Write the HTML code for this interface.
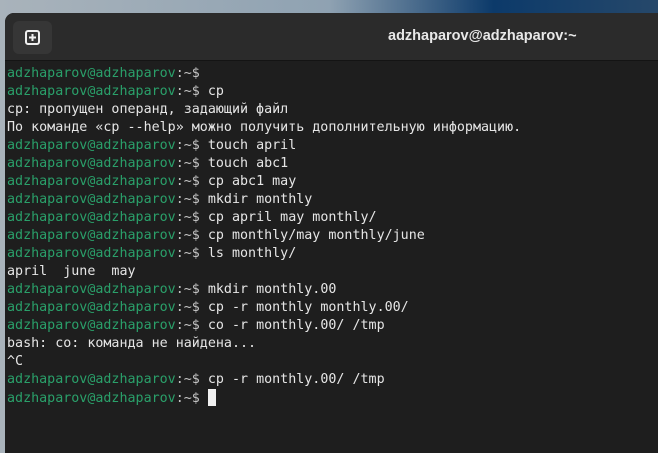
<!DOCTYPE html>
<html><head><meta charset="utf-8"><style>
html,body{margin:0;padding:0;width:658px;height:440px;overflow:hidden;background:linear-gradient(90deg,#a9b3bb 0%,#8fa2b2 50%,#0c3a6a 75%,#26486a 100%);}
.win{position:absolute;left:5px;top:13px;width:660px;height:440px;background:#1e1e1e;border-radius:9px 0 0 0;overflow:hidden;}
.hdr{height:47px;background:#2b2b2b;border-bottom:1px solid #141414;position:relative;}
.btn{position:absolute;left:8px;top:8px;width:39px;height:33px;background:#363636;border-radius:6px;}
.btn svg{position:absolute;left:12px;top:9px;}
.title{position:absolute;left:383px;top:15px;font:bold 14.5px "Liberation Sans",sans-serif;color:#e8e8e8;}
pre{margin:0;position:absolute;left:2px;top:52px;font:13.35px/18px "DejaVu Sans Mono","Liberation Mono",monospace;color:#e6e6e6;}
.g{color:#2aa06a}.s{color:#c4c4c4}
.cur{display:inline-block;width:8px;height:17px;background:#f0f0f0;vertical-align:-4px;}
</style></head><body>
<div class="win">
<div class="hdr"><div class="btn"><svg width="15" height="15" viewBox="0 0 15 15"><rect x="1" y="1" width="13" height="13" rx="2" fill="none" stroke="#f0f0f0" stroke-width="2"/><path d="M7.5 4v7M4 7.5h7" stroke="#f0f0f0" stroke-width="2"/></svg></div>
<div class="title">adzhaparov@adzhaparov:~</div></div>
<pre><span class="g">adzhaparov@adzhaparov</span><span class="s">:~$</span>
<span class="g">adzhaparov@adzhaparov</span><span class="s">:~$</span> cp
cp: пропущен операнд, задающий файл
По команде «cp --help» можно получить дополнительную информацию.
<span class="g">adzhaparov@adzhaparov</span><span class="s">:~$</span> touch april
<span class="g">adzhaparov@adzhaparov</span><span class="s">:~$</span> touch abc1
<span class="g">adzhaparov@adzhaparov</span><span class="s">:~$</span> cp abc1 may
<span class="g">adzhaparov@adzhaparov</span><span class="s">:~$</span> mkdir monthly
<span class="g">adzhaparov@adzhaparov</span><span class="s">:~$</span> cp april may monthly/
<span class="g">adzhaparov@adzhaparov</span><span class="s">:~$</span> cp monthly/may monthly/june
<span class="g">adzhaparov@adzhaparov</span><span class="s">:~$</span> ls monthly/
april  june  may
<span class="g">adzhaparov@adzhaparov</span><span class="s">:~$</span> mkdir monthly.00
<span class="g">adzhaparov@adzhaparov</span><span class="s">:~$</span> cp -r monthly monthly.00/
<span class="g">adzhaparov@adzhaparov</span><span class="s">:~$</span> co -r monthly.00/ /tmp
bash: co: команда не найдена...
^C
<span class="g">adzhaparov@adzhaparov</span><span class="s">:~$</span> cp -r monthly.00/ /tmp
<span class="g">adzhaparov@adzhaparov</span><span class="s">:~$</span> <span class="cur"></span></pre>
</div>
</body></html>
